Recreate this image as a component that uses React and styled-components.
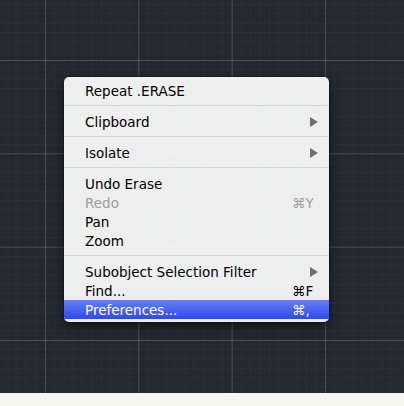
import React from "react";
import styled, { createGlobalStyle } from "styled-components";

const Global = createGlobalStyle`
  html, body { margin: 0; padding: 0; background: #232831; }
  body { font-family: "DejaVu Sans", "Liberation Sans", sans-serif; }
`;

const Page = styled.div`
  width: 404px;
  height: 406px;
  display: flex;
  flex-direction: column;
  overflow: hidden;
`;

const Canvas = styled.div`
  height: 393px;
  box-sizing: border-box;
  padding: 77px 0 0 64px;
  background-color: #232831;
  background-image:
    linear-gradient(to right, rgba(150, 160, 175, 0.3) 1px, transparent 1px),
    linear-gradient(to bottom, rgba(150, 160, 175, 0.3) 1px, transparent 1px),
    linear-gradient(to right, rgba(150, 160, 175, 0.05) 1px, transparent 1px),
    linear-gradient(to bottom, rgba(150, 160, 175, 0.05) 1px, transparent 1px);
  background-size: 93.33px 93.33px, 93.33px 93.33px, 9.333px 9.333px, 9.333px 9.333px;
  background-position: 45px 60px, 45px 60px, 45px 60px, 45px 60px;
`;

const Footer = styled.div`
  height: 13px;
  background: #f5f6ec;
`;

const Menu = styled.div`
  width: 265px;
  box-sizing: border-box;
  padding: 4px 0 3px;
  background: rgba(243, 243, 243, 0.98);
  border-radius: 5px;
  box-shadow: 0 4px 12px rgba(0, 0, 0, 0.55), 0 0 0 0.5px rgba(0, 0, 0, 0.4);
  overflow: hidden;
`;

const Row = styled.div`
  height: 19px;
  display: flex;
  align-items: center;
  padding-left: 21px;
  font-size: 13.5px;
  color: ${(p) => (p.$active ? "#ffffff" : p.$disabled ? "#9c9c9c" : "#000000")};
  background: ${(p) =>
    p.$active ? "linear-gradient(to bottom, #6880f6 0%, #4a63f3 50%, #2f49ef 100%)" : "transparent"};
`;

const Label = styled.span`
  flex: 1;
  white-space: nowrap;
`;

const Slot = styled.span`
  width: 37px;
  flex: none;
  display: flex;
  align-items: center;
  justify-content: ${(p) => (p.$arrow ? "flex-end" : "flex-start")};
  padding-right: ${(p) => (p.$arrow ? "11px" : "0")};
  box-sizing: border-box;
  white-space: nowrap;
`;

const Separator = styled.div`
  height: 12px;
  display: flex;
  flex-direction: column;
  &::before {
    content: "";
    margin-top: 5px;
    height: 1px;
    background: #d6d6d6;
  }
`;

const Arrow = () => (
  <svg width="8" height="10" viewBox="0 0 8 10">
    <path d="M0 0 L8 5 L0 10 Z" fill="#6f6f6f" />
  </svg>
);

const Item = ({ label, shortcut, submenu, disabled, active }) => (
  <Row $disabled={disabled} $active={active}>
    <Label>{label}</Label>
    {submenu ? (
      <Slot $arrow>
        <Arrow />
      </Slot>
    ) : (
      <Slot>{shortcut}</Slot>
    )}
  </Row>
);

export default function App() {
  return (
    <>
      <Global />
      <Page>
        <Canvas>
          <Menu>
            <Item label="Repeat .ERASE" />
            <Separator />
            <Item label="Clipboard" submenu />
            <Separator />
            <Item label="Isolate" submenu />
            <Separator />
            <Item label="Undo Erase" />
            <Item label="Redo" shortcut="⌘Y" disabled />
            <Item label="Pan" />
            <Item label="Zoom" />
            <Separator />
            <Item label="Subobject Selection Filter" submenu />
            <Item label="Find..." shortcut="⌘F" />
            <Item label="Preferences..." shortcut="⌘," active />
          </Menu>
        </Canvas>
        <Footer />
      </Page>
    </>
  );
}
